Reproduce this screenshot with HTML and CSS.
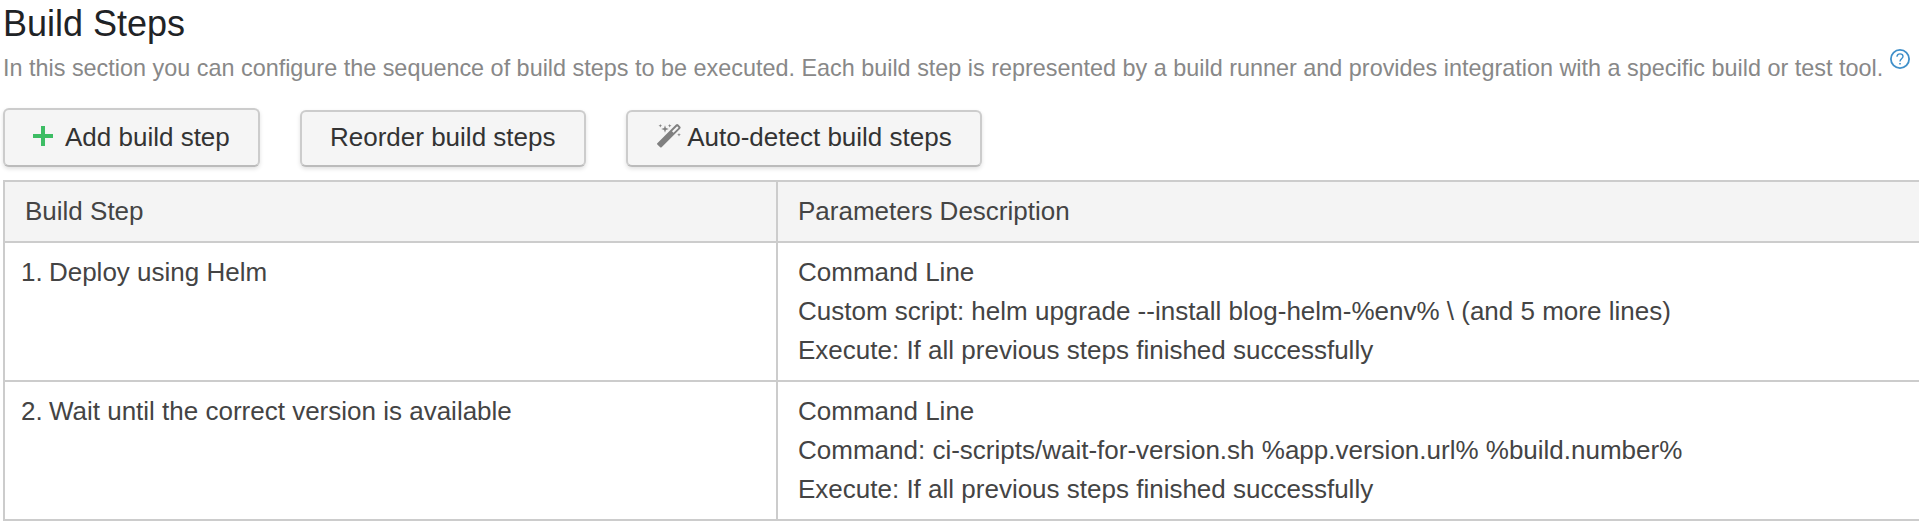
FILE: index.html
```html
<!DOCTYPE html>
<html lang="en">
<head>
<meta charset="utf-8">
<title>Build Steps</title>
<link rel="stylesheet" href="styles.css">
</head>
<body>
<main class="page">
  <h1 class="title">Build Steps</h1>
  <p class="note"><span class="note-text">In this section you can configure the sequence of build steps to be executed. Each build step is represented by a build runner and provides integration with a specific build or test tool.</span>
    <svg class="help" viewBox="0 0 20 20" fill="none" stroke="#3f8fc9"><circle cx="10" cy="10" r="9.1" stroke-width="1.8"/><path d="M7 7.800C7 5.900 8.200 4.900 10 4.900s3 1 3 2.600c0 2.100-3 2.400-3 4.900" stroke-width="1.400"/><path d="M9.200 14.700h1.600" stroke-width="1.600"/></svg>
  </p>
  <div class="actions">
    <button class="btn btn-add"><svg class="plus" viewBox="0 0 20 20"><path d="M8 0h4v8h8v4h-8v8H8v-8H0V8h8z" fill="#3dbd64"/></svg>Add build step</button>
    <button class="btn btn-reorder">Reorder build steps</button>
    <button class="btn btn-detect"><svg class="wand" viewBox="0 0 24 24" fill="#808080"><path fill-rule="evenodd" d="M.3 19.200 19 .6q1.200-1 2.300 0l1.800 1.800q1.100 1.100 0 2.300L4.600 23.300q-.7.6-1.400 0L.3 20.400q-.6-.6 0-1.200zM15 7.300l1.500 1.500L21.600 3.700 20.200 2.200z"/><path d="m8 1.200.9 2.700 2.900 1-2.900 1L8 8.800l-.9-2.900-2.900-1 2.900-1zM3.300 0l.5 1.200 1.400.5-1.400.5-.5 1.300-.5-1.300-1.300-.5 1.300-.5zM12.700 0l.5 1.200 1.400.5-1.400.5-.5 1.300-.5-1.300-1.300-.5 1.300-.5zM22 9l.5 1.300 1.400.5-1.400.5L22 12.600l-.5-1.300-1.300-.5 1.300-.5z"/></svg>Auto-detect build steps</button>
  </div>
  <table class="steps">
    <thead>
      <tr><th class="name-col">Build Step</th><th>Parameters Description</th></tr>
    </thead>
    <tbody>
      <tr>
        <td class="name"><span class="num">1.</span> Deploy using Helm</td>
        <td>Command Line<br>Custom script: helm upgrade --install blog-helm-%env% \ (and 5 more lines)<br>Execute: If all previous steps finished successfully</td>
      </tr>
      <tr>
        <td class="name"><span class="num">2.</span> Wait until the correct version is available</td>
        <td>Command Line<br>Command: ci-scripts/wait-for-version.sh %app.version.url% %build.number%<br>Execute: If all previous steps finished successfully</td>
      </tr>
    </tbody>
  </table>
</main>
</body>
</html>
```

FILE: styles.css
```css
* { box-sizing: border-box; }
body {
  margin: 0;
  overflow: hidden;
  background: #fff;
  color: #444;
  font: 26px/39px "Liberation Sans", Arial, sans-serif;
}
.page { padding-left: 3px; }
.title {
  margin: 0;
  height: 48px;
  color: #1f2326;
  font-size: 36px;
  font-weight: 400;
  line-height: 48px;
}
.note {
  display: flex;
  align-items: flex-start;
  gap: 7px;
  margin: 0;
  height: 60px;
  color: #888;
  font-size: 23.4px;
  line-height: 40px;
  white-space: nowrap;
}
.help {
  flex: none;
  width: 20px;
  height: 20px;
  margin-top: 1px;
}
.actions {
  display: flex;
  align-items: flex-end;
  gap: 40px;
  height: 59px;
  margin-bottom: 13px;
}
.btn {
  display: flex;
  align-items: flex-start;
  height: 57px;
  padding: 6px 0 0 28px;
  border: 2px solid #ccc;
  border-bottom-color: #bbb;
  border-radius: 6px;
  background: #f5f5f5;
  box-shadow: 0 2px 4px rgba(0, 0, 0, .12);
  color: #333;
  font: inherit;
  white-space: nowrap;
}
.btn-add { width: 257px; height: 59px; padding-top: 8px; }
.btn-reorder { width: 286px; }
.btn-detect { width: 356px; }
.plus { width: 20px; height: 20px; margin: 8px 12px 0 0; }
.wand { width: 24px; height: 24px; margin: 6px 6.500px 0 .7px; }
.steps {
  width: 1960px;
  border-collapse: separate;
  border-spacing: 0;
  table-layout: fixed;
  border-top: 2px solid #ccc;
  border-left: 2px solid #ccc;
}
.steps th, .steps td {
  padding: 10px 20px;
  border-right: 2px solid #ccc;
  border-bottom: 2px solid #ccc;
  text-align: left;
  vertical-align: top;
  font-weight: 400;
}
.steps th { background: #f4f4f4; }
.steps .name-col { width: 773px; }
.steps .name { padding-left: 16px; }
.num { margin-right: -1px; }
```
